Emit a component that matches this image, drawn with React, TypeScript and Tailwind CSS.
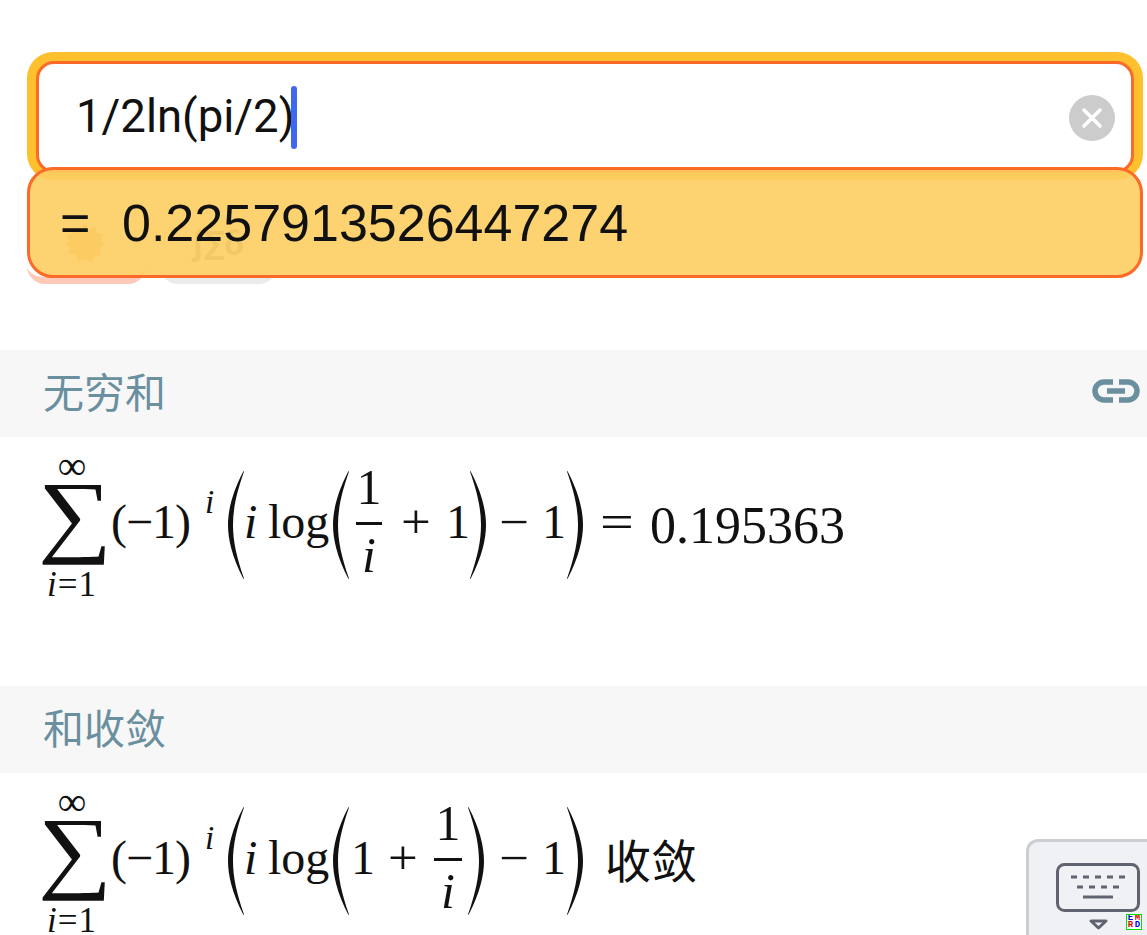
import React from "react";

const serif = "font-['Liberation_Serif',serif]";

function BigParen({ right, cls = "" }: { right?: boolean; cls?: string }) {
  return (
    <svg width="16" height="108" viewBox="0 0 16 108" className={`${right ? "-scale-x-100" : ""} ${cls} shrink-0 -translate-y-[3px]`}>
      <path d="M15.500 0C4 22 0 40 0 54c0 14 4 32 15.500 54l.5-.5C8.500 86 5 70 5 54S8.500 22 16 .5z" fill="#111" />
    </svg>
  );
}

function Sigma() {
  return (
    <div className={`${serif} w-[60px] ml-[45px] h-[145px] flex flex-col items-center shrink-0 text-[#111]`}>
      <div className="h-[30px] text-[40px] leading-[22px] -translate-x-[3px]">∞</div>
      <div className="h-[88px] w-[60px] flex items-center justify-center overflow-visible text-[92px] leading-[88px] scale-x-[1.13] -translate-y-[15px]">∑</div>
      <div className="h-[27px] text-[35px] leading-[27px] whitespace-nowrap tracking-[1px] -translate-x-[3px] -translate-y-[2px]"><i>i</i>=1</div>
    </div>
  );
}

function Frac({ ml, w }: { ml: string; w: string }) {
  return (
    <div className={`${ml} ${w} flex flex-col items-center text-[50px] shrink-0 -translate-y-[3px]`}>
      <div className="leading-[52px] h-[52px] -translate-y-[9px]">1</div>
      <div className="w-full h-[3px] bg-[#111]"></div>
      <div className="leading-[52px] h-[54px] translate-y-[4px]"><i>i</i></div>
    </div>
  );
}

const up = "-translate-y-[6px]";

function Prefix() {
  return (
    <>
      <Sigma />
      <span className={`ml-[6px] w-[80px] shrink-0 whitespace-nowrap tracking-[-1px] ${up}`}>(−1)</span>
      <sup className="text-[33px] leading-none -mt-[18px] ml-[14px] w-[10px] shrink-0 not-italic"><i>i</i></sup>
      <BigParen cls="ml-[13px]" />
      <span className={`w-[14px] shrink-0 ${up}`}><i>i</i></span>
      <span className={`ml-[10px] w-[64px] shrink-0 ${up}`}>log</span>
      <BigParen cls="ml-[1px]" />
    </>
  );
}

function Header({ title, link }: { title: string; link?: boolean }) {
  return (
    <div className="h-[87px] bg-[#f7f7f7] flex items-center justify-between pl-[43px] pr-[7px]">
      <span className="text-[41px] leading-none text-[#6a8f9f] font-['Noto_Sans_CJK_SC',sans-serif] -translate-y-[3px]">{title}</span>
      {link && (
        <svg width="48" height="24" viewBox="0 0 48 24" fill="none" stroke="#6a8f9f" strokeWidth="5.500" className="-translate-y-[3px]">
          <path d="M21 3H12a9 9 0 0 0 0 18h9M27 3h9a9 9 0 0 1 0 18h-9M15 12h18" />
        </svg>
      )}
    </div>
  );
}

export default function App() {
  return (
    <div className="relative h-[935px] w-[1147px] overflow-hidden bg-white font-['Roboto',sans-serif] text-[#111]">
      <div className="pt-[52px] pl-[27px] pr-[4px]">
        <div className="h-[128px] rounded-[26px] bg-[#ffc02e] p-[9px]">
          <div className="h-[112px] rounded-[18px] border-[3px] border-[#fb6a28] bg-white flex items-start pl-[37px] pr-[16px]">
            <span className="text-[45.500px] leading-[106px] h-[106px]">1/2ln(pi/2)</span>
            <span className="w-[6px] h-[63px] mt-[22px] -ml-[3px] rounded-[3px] bg-[#3f68ee]"></span>
            <span className="ml-auto mt-[31px] w-[46px] h-[46px] rounded-full bg-[#cccccc] flex items-center justify-center">
              <svg width="20" height="20" viewBox="0 0 20 20" stroke="#fff" strokeWidth="3.500" strokeLinecap="round">
                <path d="M2 2l16 16M18 2L2 18" />
              </svg>
            </span>
          </div>
        </div>
      </div>

      <div className="flex gap-[14px] pl-[27px] mt-[13px] h-[91px]">
        <div className="w-[119px] rounded-[18px] bg-white border-b-[7px] border-[#ffc9b9] flex items-center justify-center text-[#ffb070]">
          <svg width="42" height="42" viewBox="0 0 24 24" fill="currentColor" className="translate-y-[8px] -translate-x-[2px]"><path d="M12 1l2.500 3 3.500-1.500.8 3.800 3.800.8L21 11l2 2-2.500 2.500.8 3.800-3.800.3L16 22.500 12 21l-4 1.500-1.500-3.900-3.800-.3.8-3.800L1 13l2-2-1.600-3.900 3.800-.8.8-3.800L9.500 4z" /></svg>
        </div>
        <div className="w-[117px] rounded-[18px] bg-white border-b-[7px] border-[#ebebeb] flex items-center justify-center text-[34px] font-bold text-[#909090] translate-y-[0px]"><span className="translate-y-[8px]">∫∑δ</span></div>
      </div>

      <div className="absolute left-[27px] top-[167px] w-[1116px] h-[111px] rounded-[26px] border-[3px] border-[#fb6a28] bg-[rgba(252,206,97,0.9)] flex items-center pl-[30px] font-['Liberation_Sans',sans-serif]">
        <span className="text-[52px] leading-none w-[62px]">=</span>
        <span className="text-[52px] leading-none">0.2257913526447274</span>
      </div>

      <div className="mt-[66px]">
        <Header title="无穷和" link />
        <div className="h-[249px] pt-[18px]">
          <div className={`${serif} flex items-center h-[145px] text-[48px] leading-none`}>
            <Prefix />
            <Frac ml="ml-[7px]" w="w-[26px]" />
            <span className={`ml-[20px] w-[28px] shrink-0 text-center scale-x-110 ${up}`}>+</span>
            <span className={`ml-[16px] w-[20px] shrink-0 text-center ${up}`}>1</span>
            <BigParen right cls="ml-[4px]" />
            <span className={`ml-[14px] w-[28px] shrink-0 text-center scale-x-110 ${up}`}>−</span>
            <span className={`ml-[14px] w-[22px] shrink-0 text-center ${up}`}>1</span>
            <BigParen right cls="ml-[3px]" />
            <span className={`ml-[16px] w-[36px] shrink-0 text-center scale-x-125 ${up}`}>=</span>
            <span className="ml-[15px] text-[52px] whitespace-nowrap -translate-y-[2px]">0.195363</span>
          </div>
        </div>
        <Header title="和收敛" />
        <div className="h-[162px] pt-[18px]">
          <div className={`${serif} flex items-center h-[145px] text-[48px] leading-none`}>
            <Prefix />
            <span className={`ml-[2px] w-[22px] shrink-0 text-center ${up}`}>1</span>
            <span className={`ml-[15px] w-[30px] shrink-0 text-center scale-x-110 ${up}`}>+</span>
            <Frac ml="ml-[16px]" w="w-[28px]" />
            <BigParen right cls="ml-[6px]" />
            <span className={`ml-[16px] w-[28px] shrink-0 text-center scale-x-110 ${up}`}>−</span>
            <span className={`ml-[14px] w-[22px] shrink-0 text-center ${up}`}>1</span>
            <BigParen right cls="ml-[3px]" />
            <span className="ml-[22px] text-[46px] whitespace-nowrap font-['Noto_Sans_CJK_SC',sans-serif] -translate-y-[6px]">收敛</span>
          </div>
        </div>
      </div>

      <div className="absolute right-0 bottom-0 w-[121px] h-[96px] rounded-tl-[12px] border-l-[3px] border-t-[3px] border-[#cdced2] bg-[#f0f1f4] pl-[27px] pt-[21px]">
        <svg width="84" height="70" viewBox="0 0 84 70" fill="none" stroke="#5f6470">
          <rect x="1.500" y="1.500" width="81" height="46" rx="7" strokeWidth="3" />
          <path d="M15 14h6M27 14h6M39 14h6M51 14h6M63 14h6M21 24h6M33 24h6M45 24h6M57 24h6" strokeWidth="3" />
          <path d="M27 34h30" strokeWidth="3" />
          <path d="M35 58h15l-7.500 7z" strokeWidth="3" strokeLinejoin="round" />
        </svg>
      </div>
      <div className="absolute left-[1126px] top-[914px] w-[16px] h-[16px] border-[1px] border-[#00e000] bg-white grid grid-cols-2 text-[9px] leading-[7px] font-bold font-['Liberation_Mono',monospace] text-center overflow-hidden">
        <span className="text-[#0000e0]">E</span><span className="text-[#e00000]">M</span>
        <span className="text-[#e00000]">R</span><span className="text-[#0000e0]">D</span>
      </div>
    </div>
  );
}
